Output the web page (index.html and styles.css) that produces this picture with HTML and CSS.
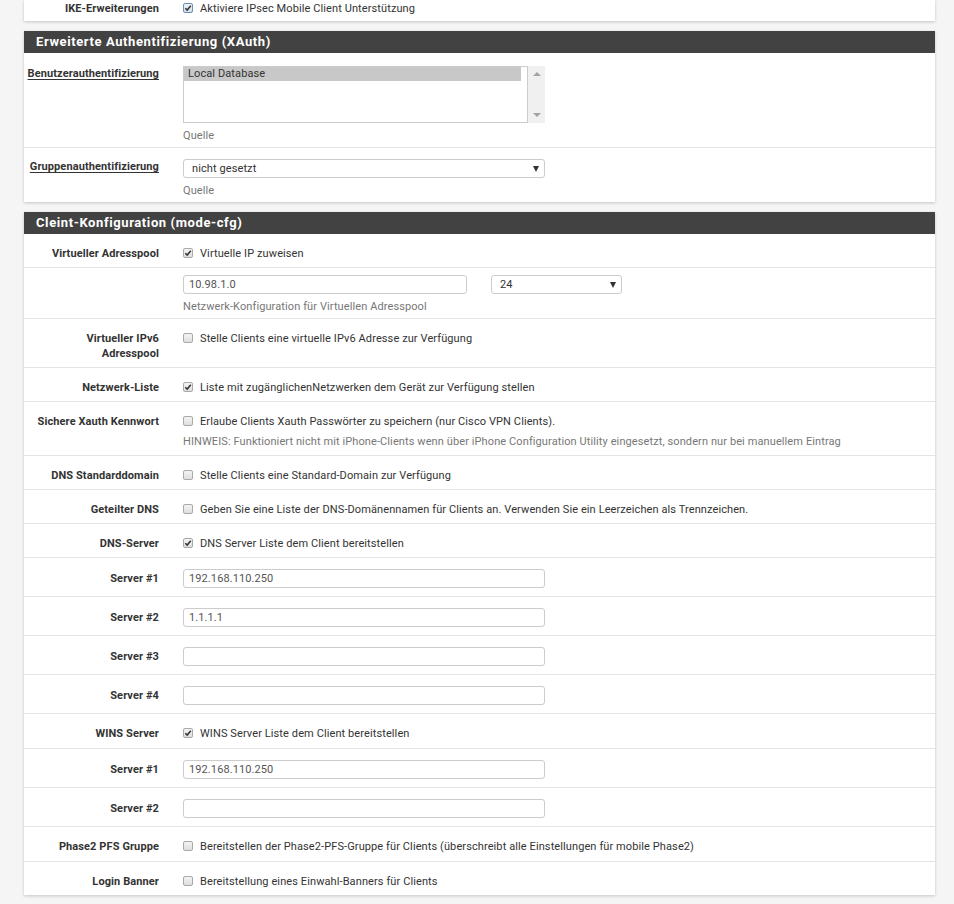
FILE: index.html
```html
<!DOCTYPE html>
<html lang="de">
<head>
<meta charset="utf-8">
<title>IPsec Mobile Clients</title>
<link rel="stylesheet" href="styles.css">
</head>
<body>
<div class="page">
  <section class="panel panel-top">
    <div class="row row-top">
      <div class="label">IKE-Erweiterungen</div>
      <div class="content"><span class="cb on blue"><svg viewBox="0 0 10 10"><path d="M2.3 5.2 L4.2 7.1 L7.8 2.8" /></svg></span>Aktiviere IPsec Mobile Client Unterstützung</div>
    </div>
  </section>

  <section class="panel">
    <h2 class="heading">Erweiterte Authentifizierung (XAuth)</h2>
    <div class="row row-list">
      <div class="label"><span class="u">Benutzerauthentifizierung</span></div>
      <div class="content">
        <div class="listbox">
          <div class="listbox-box"><div class="opt selected">Local Database</div></div>
          <div class="scroll"><span class="arr up"></span><span class="arr down"></span></div>
        </div>
        <div class="help">Quelle</div>
      </div>
    </div>
    <div class="row row-field">
      <div class="label"><span class="u">Gruppenauthentifizierung</span></div>
      <div class="content">
        <div class="select wide">nicht gesetzt<span class="caret"></span></div>
        <div class="help">Quelle</div>
      </div>
    </div>
  </section>

  <section class="panel">
    <h2 class="heading">Cleint-Konfiguration (mode-cfg)</h2>
    <div class="row">
      <div class="label">Virtueller Adresspool</div>
      <div class="content"><span class="cb on"><svg viewBox="0 0 10 10"><path d="M2.3 5.2 L4.2 7.1 L7.8 2.8" /></svg></span>Virtuelle IP zuweisen</div>
    </div>
    <div class="row row-addr">
      <div class="label"></div>
      <div class="content">
        <div class="addr">
          <div class="input addr-ip">10.98.1.0</div>
          <div class="select mask">24<span class="caret"></span></div>
        </div>
        <div class="help">Netzwerk-Konfiguration für Virtuellen Adresspool</div>
      </div>
    </div>
    <div class="row">
      <div class="label">Virtueller IPv6<br>Adresspool</div>
      <div class="content"><span class="cb"></span>Stelle Clients eine virtuelle IPv6 Adresse zur Verfügung</div>
    </div>
    <div class="row">
      <div class="label">Netzwerk-Liste</div>
      <div class="content"><span class="cb on"><svg viewBox="0 0 10 10"><path d="M2.3 5.2 L4.2 7.1 L7.8 2.8" /></svg></span>Liste mit zugänglichenNetzwerken dem Gerät zur Verfügung stellen</div>
    </div>
    <div class="row">
      <div class="label">Sichere Xauth Kennwort</div>
      <div class="content"><span class="cb"></span>Erlaube Clients Xauth Passwörter zu speichern (nur Cisco VPN Clients).
        <div class="help help-inline">HINWEIS: Funktioniert nicht mit iPhone-Clients wenn über iPhone Configuration Utility eingesetzt, sondern nur bei manuellem Eintrag</div>
      </div>
    </div>
    <div class="row">
      <div class="label">DNS Standarddomain</div>
      <div class="content"><span class="cb"></span>Stelle Clients eine Standard-Domain zur Verfügung</div>
    </div>
    <div class="row">
      <div class="label">Geteilter DNS</div>
      <div class="content"><span class="cb"></span>Geben Sie eine Liste der DNS-Domänennamen für Clients an. Verwenden Sie ein Leerzeichen als Trennzeichen.</div>
    </div>
    <div class="row">
      <div class="label">DNS-Server</div>
      <div class="content"><span class="cb on"><svg viewBox="0 0 10 10"><path d="M2.3 5.2 L4.2 7.1 L7.8 2.8" /></svg></span>DNS Server Liste dem Client bereitstellen</div>
    </div>
    <div class="row row-input">
      <div class="label">Server #1</div>
      <div class="content"><div class="input">192.168.110.250</div></div>
    </div>
    <div class="row row-input">
      <div class="label">Server #2</div>
      <div class="content"><div class="input">1.1.1.1</div></div>
    </div>
    <div class="row row-input">
      <div class="label">Server #3</div>
      <div class="content"><div class="input"></div></div>
    </div>
    <div class="row row-input">
      <div class="label">Server #4</div>
      <div class="content"><div class="input"></div></div>
    </div>
    <div class="row row-tall">
      <div class="label">WINS Server</div>
      <div class="content"><span class="cb on"><svg viewBox="0 0 10 10"><path d="M2.3 5.2 L4.2 7.1 L7.8 2.8" /></svg></span>WINS Server Liste dem Client bereitstellen</div>
    </div>
    <div class="row row-input">
      <div class="label">Server #1</div>
      <div class="content"><div class="input">192.168.110.250</div></div>
    </div>
    <div class="row row-input">
      <div class="label">Server #2</div>
      <div class="content"><div class="input"></div></div>
    </div>
    <div class="row row-tall">
      <div class="label">Phase2 PFS Gruppe</div>
      <div class="content"><span class="cb"></span>Bereitstellen der Phase2-PFS-Gruppe für Clients (überschreibt alle Einstellungen für mobile Phase2)</div>
    </div>
    <div class="row">
      <div class="label">Login Banner</div>
      <div class="content"><span class="cb"></span>Bereitstellung eines Einwahl-Banners für Clients</div>
    </div>
  </section>
</div>
</body>
</html>
```

FILE: styles.css
```css
html, body {
  margin: 0;
  padding: 0;
}
body {
  background: #f5f5f5;
  font-family: Roboto, "Liberation Sans", Arial, sans-serif;
  font-size: 11px;
  letter-spacing: 0.1px;
  color: #333;
}
.page {
  width: 911px;
  padding-left: 24px;
}
.panel {
  background: #fff;
  box-shadow: 0 1px 3px rgba(0, 0, 0, 0.2);
  margin-bottom: 10px;
}
.heading {
  margin: 0;
  background: #424242;
  color: #fff;
  font-size: 13px;
  font-weight: bold;
  height: 22px;
  line-height: 22px;
  padding-left: 12px;
  letter-spacing: 0.6px;
}
.row {
  display: grid;
  grid-template-columns: 147px 1fr;
  border-top: 1px solid #e4e4e4;
  padding: 12px 0 6px;
  line-height: 15px;
}
.row-tall {
  padding-bottom: 7px;
}
.heading + .row,
.row-top {
  border-top: 0;
}
.row-top {
  padding: 1px 0 5px;
}
.label {
  text-align: right;
  padding-right: 12px;
  font-weight: bold;
  color: #333;
}
.u {
  text-decoration: underline;
  text-underline-offset: 2px;
}
.content {
  padding-left: 12px;
  color: #333;
}
.help {
  color: #777;
  margin-top: 5px;
}
.help-inline {
  margin-top: 5px;
}
.cb {
  display: inline-block;
  box-sizing: border-box;
  width: 10px;
  height: 10px;
  border: 1px solid #a9a9a9;
  border-radius: 2px;
  background: linear-gradient(#f4f4f4, #dedede);
  vertical-align: -1px;
  margin: 0 7px 0 0;
  position: relative;
}
.cb svg {
  position: absolute;
  left: -1px;
  top: -1px;
  width: 10px;
  height: 10px;
}
.cb svg path {
  fill: none;
  stroke: #333;
  stroke-width: 1.5;
}
.cb.blue {
  border-color: #6d8eb3;
  background: linear-gradient(#eef3f8, #d4dfeb);
}
.row-list {
  padding: 13px 0 4px;
}
.row-field {
  padding: 11px 0 4px;
}
.row-addr {
  padding: 7px 0 4px;
}
.row-input {
  padding: 11px 0 8px;
  align-items: center;
}
.listbox {
  display: flex;
  width: 362px;
  height: 57px;
}
.listbox-box {
  box-sizing: border-box;
  width: 345px;
  height: 57px;
  border: 1px solid #ccc;
  padding: 0 6px 0 0;
}
.opt {
  line-height: 14px;
  padding-left: 4px;
  color: #333;
}
.opt.selected {
  background: #c8c8c8;
}
.scroll {
  width: 17px;
  background: #f0f0f0;
  display: flex;
  flex-direction: column;
  justify-content: space-between;
  align-items: center;
  padding: 6px 0;
  box-sizing: border-box;
}
.arr {
  width: 0;
  height: 0;
  border-left: 4px solid transparent;
  border-right: 4px solid transparent;
}
.arr.up {
  border-bottom: 4px solid #a3a3a3;
}
.arr.down {
  border-top: 4px solid #a3a3a3;
}
.input,
.select {
  box-sizing: border-box;
  height: 19px;
  border: 1px solid #ccc;
  border-radius: 3px;
  line-height: 17px;
  padding-left: 5px;
  color: #555;
  background: #fff;
}
.input {
  width: 362px;
}
.select {
  display: flex;
  justify-content: space-between;
  align-items: center;
  padding-left: 8px;
  padding-right: 5px;
  color: #333;
}
.select.wide {
  width: 362px;
}
.caret {
  width: 0;
  height: 0;
  border-left: 3px solid transparent;
  border-right: 3px solid transparent;
  border-top: 6px solid #333;
}
.addr {
  display: flex;
  gap: 24px;
}
.addr-ip {
  width: 284px;
}
.select.mask {
  width: 131px;
}
```
